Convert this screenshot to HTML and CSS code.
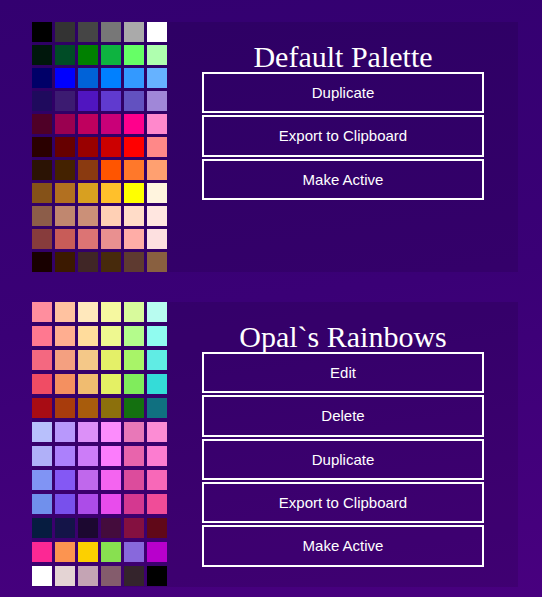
FILE: index.html
```html
<!DOCTYPE html>
<html lang="en">
<head>
<meta charset="utf-8">
<title>Palettes</title>
<link rel="stylesheet" href="styles.css">
</head>
<body>
<main class="palettes">
  <section class="palette">
    <div class="swatches">
      <span style="background:#000000"></span><span style="background:#333333"></span><span style="background:#454545"></span><span style="background:#777777"></span><span style="background:#aaaaaa"></span><span style="background:#ffffff"></span>
      <span style="background:#00170c"></span><span style="background:#004c26"></span><span style="background:#008000"></span><span style="background:#0eb340"></span><span style="background:#66ff66"></span><span style="background:#afffaf"></span>
      <span style="background:#000068"></span><span style="background:#0000ff"></span><span style="background:#0062d8"></span><span style="background:#0080ff"></span><span style="background:#3399ff"></span><span style="background:#66b2ff"></span>
      <span style="background:#1f0a5d"></span><span style="background:#3c1b71"></span><span style="background:#5015c0"></span><span style="background:#603acf"></span><span style="background:#6251c0"></span><span style="background:#a087d8"></span>
      <span style="background:#4f0027"></span><span style="background:#9a0050"></span><span style="background:#bf005e"></span><span style="background:#c90078"></span><span style="background:#ff008c"></span><span style="background:#ff88cc"></span>
      <span style="background:#2a0000"></span><span style="background:#660000"></span><span style="background:#990000"></span><span style="background:#cc0000"></span><span style="background:#ff0000"></span><span style="background:#ff8888"></span>
      <span style="background:#2b1304"></span><span style="background:#442200"></span><span style="background:#8a3a10"></span><span style="background:#ff5500"></span><span style="background:#ff782a"></span><span style="background:#ffa070"></span>
      <span style="background:#855218"></span><span style="background:#b27020"></span><span style="background:#d8a020"></span><span style="background:#ffc02b"></span><span style="background:#ffff00"></span><span style="background:#fff4de"></span>
      <span style="background:#8c5d49"></span><span style="background:#c0876f"></span><span style="background:#cb9078"></span><span style="background:#ffd0b5"></span><span style="background:#ffdcc8"></span><span style="background:#ffe6e0"></span>
      <span style="background:#873c3c"></span><span style="background:#c85c58"></span><span style="background:#dc7474"></span><span style="background:#e99090"></span><span style="background:#ffada7"></span><span style="background:#fde0e0"></span>
      <span style="background:#180000"></span><span style="background:#3b1900"></span><span style="background:#402626"></span><span style="background:#472a0c"></span><span style="background:#5e3a30"></span><span style="background:#896040"></span>
    </div>
    <div class="actions">
      <h2 class="palette-title">Default Palette</h2>
      <div class="action-list">
        <button class="action" type="button">Duplicate</button>
        <button class="action" type="button">Export to Clipboard</button>
        <button class="action" type="button">Make Active</button>
      </div>
    </div>
  </section>

  <section class="palette">
    <div class="swatches swatches-loose">
      <span style="background:#ff8e9e"></span><span style="background:#ffc2a0"></span><span style="background:#ffe8bc"></span><span style="background:#f6f8a0"></span><span style="background:#d8fa9c"></span><span style="background:#b8fcf0"></span>
      <span style="background:#ff7890"></span><span style="background:#ffae90"></span><span style="background:#ffdc9c"></span><span style="background:#eef890"></span><span style="background:#b4fc8c"></span><span style="background:#90fcf0"></span>
      <span style="background:#f46880"></span><span style="background:#f4a080"></span><span style="background:#f4c888"></span><span style="background:#e4f068"></span><span style="background:#a8f468"></span><span style="background:#60ece4"></span>
      <span style="background:#f04c64"></span><span style="background:#f49060"></span><span style="background:#f0bc70"></span><span style="background:#e4f064"></span><span style="background:#80ec5c"></span><span style="background:#34dcd8"></span>
      <span style="background:#a80c14"></span><span style="background:#a83c0c"></span><span style="background:#a85c0c"></span><span style="background:#8c700c"></span><span style="background:#147010"></span><span style="background:#107080"></span>
      <span style="background:#b8c0fc"></span><span style="background:#b898fc"></span><span style="background:#dc90f8"></span><span style="background:#fc8cfc"></span><span style="background:#e878b8"></span><span style="background:#fc8cd4"></span>
      <span style="background:#b0b0f8"></span><span style="background:#ac80fc"></span><span style="background:#cc7cf8"></span><span style="background:#fc7cfc"></span><span style="background:#e864ac"></span><span style="background:#fc7cd0"></span>
      <span style="background:#8094f4"></span><span style="background:#8458f4"></span><span style="background:#c068ec"></span><span style="background:#f464f0"></span><span style="background:#dc4c9c"></span><span style="background:#f868b8"></span>
      <span style="background:#7090ec"></span><span style="background:#7850ec"></span><span style="background:#ac4ce8"></span><span style="background:#e84cec"></span><span style="background:#d43890"></span><span style="background:#f04c98"></span>
      <span style="background:#061c40"></span><span style="background:#141448"></span><span style="background:#1c0830"></span><span style="background:#440c3c"></span><span style="background:#841040"></span><span style="background:#600818"></span>
      <span style="background:#fc2894"></span><span style="background:#fc9450"></span><span style="background:#fcd000"></span><span style="background:#88e050"></span><span style="background:#8868dc"></span><span style="background:#b800cc"></span>
      <span style="background:#ffffff"></span><span style="background:#e4d4d4"></span><span style="background:#c4a4b4"></span><span style="background:#845c6c"></span><span style="background:#34242c"></span><span style="background:#000000"></span>
    </div>
    <div class="actions">
      <h2 class="palette-title">Opal`s Rainbows</h2>
      <div class="action-list">
        <button class="action" type="button">Edit</button>
        <button class="action" type="button">Delete</button>
        <button class="action" type="button">Duplicate</button>
        <button class="action" type="button">Export to Clipboard</button>
        <button class="action" type="button">Make Active</button>
      </div>
    </div>
  </section>
</main>
</body>
</html>
```
FILE: styles.css
```css
html, body {
  margin: 0;
  height: 100%;
}

body {
  background: linear-gradient(172deg, #330070 0%, #3a0076 50%, #48007f 100%);
  font-family: "Liberation Sans", Arial, sans-serif;
  color: #ffffff;
  overflow: hidden;
}

.palettes {
  display: flex;
  flex-direction: column;
  gap: 30px;
  padding: 22px 0 0 32px;
}

.palette {
  display: flex;
  align-items: flex-start;
  width: 486px;
  background: rgba(0, 0, 0, 0.1);
}

.swatches {
  display: grid;
  grid-template-columns: repeat(6, 20px);
  grid-auto-rows: 20px;
  gap: 3px;
  flex: none;
}

.swatches-loose {
  row-gap: 4px;
}

.swatches span {
  display: block;
}

.actions {
  width: 282px;
  margin-left: 35px;
  padding: 20px 0 20px;
}

.palette-title {
  margin: 0;
  font-family: "Liberation Serif", "Times New Roman", serif;
  font-size: 30px;
  font-weight: normal;
  line-height: 30px;
  text-align: center;
  color: #ffffff;
}

.action-list {
  display: flex;
  flex-direction: column;
  gap: 2px;
}

.action {
  display: flex;
  align-items: center;
  justify-content: center;
  height: 41.33px;
  margin: 0;
  padding: 0;
  box-sizing: border-box;
  border: 2px solid #ffffff;
  background: transparent;
  color: #ffffff;
  font-family: "Liberation Sans", Arial, sans-serif;
  font-size: 15px;
  cursor: pointer;
}
```
